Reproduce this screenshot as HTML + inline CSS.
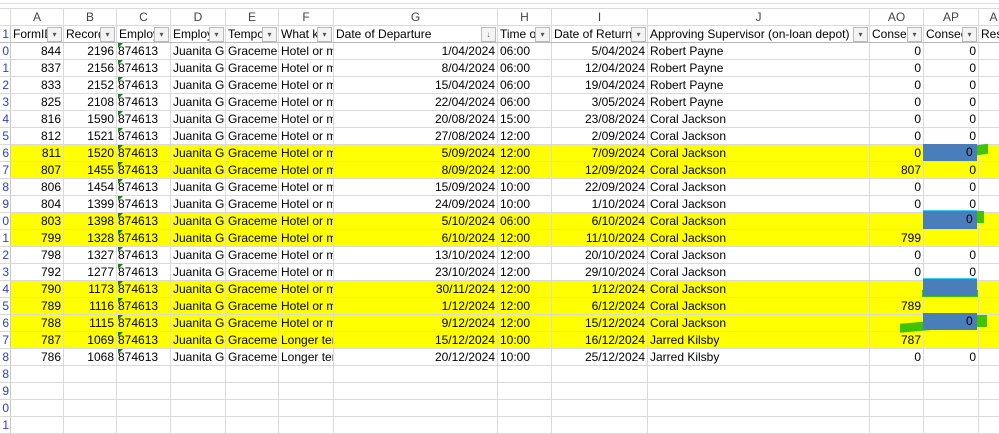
<!DOCTYPE html>
<html><head><meta charset="utf-8"><style>
body{margin:0;width:999px;height:422px;overflow:hidden;background:#fff;font-family:"Liberation Sans",sans-serif;font-size:12px;color:#000;position:relative}
table{position:absolute;left:-1px;top:8px;border-collapse:collapse;table-layout:fixed;width:1009px}
td{height:16px;padding:0 2px;border:1px solid #dadada;white-space:nowrap;overflow:hidden;line-height:16px;position:relative}
tr.L td{background:#fff;text-align:center;color:#444;border-color:#dadada;height:16px}
tr.H td{height:16px;border-bottom:1px solid #bbb}
td.rh{color:#2b3fc8;text-align:right;padding:0 1px 0 0;background:#fff;border-right:1px solid #c8c8c8}
.r{text-align:right}
tr.y td:not(.rh){background:#ffff00}
.c{padding-left:1px}
.c:before{content:"";position:absolute;left:1px;top:0;border-top:5px solid #1e7a1e;border-right:5px solid transparent}
.dd{position:absolute;right:1px;top:1px;width:13px;height:13px;border:1px solid #bbb;background:#f4f4f4;font-size:8px;line-height:13px;text-align:center;color:#555}
.blue{position:absolute;background:#4a7ebb}
.grn{position:absolute;background:#3ec400}
.b0{position:absolute;font-size:12px;line-height:17px}
</style></head><body>
<div style="position:absolute;left:0;top:0;width:999px;height:3px;border-bottom:1px solid #ddd;background:#fff"></div>
<table>
<colgroup><col style="width:11px"><col style="width:53px"><col style="width:53px"><col style="width:54px"><col style="width:55px"><col style="width:53px"><col style="width:55px"><col style="width:164px"><col style="width:54px"><col style="width:96px"><col style="width:222px"><col style="width:54px"><col style="width:55px"><col style="width:30px"></colgroup>
<tr class="L"><td class="rh"></td><td>A</td><td>B</td><td>C</td><td>D</td><td>E</td><td>F</td><td>G</td><td>H</td><td>I</td><td>J</td><td>AO</td><td>AP</td><td>A</td></tr>
<tr class="H"><td class="rh">1</td><td>FormID<span class="dd">▾</span></td><td>Record<span class="dd">▾</span></td><td>Employ<span class="dd">▾</span></td><td>Employ<span class="dd">▾</span></td><td>Tempo<span class="dd">▾</span></td><td>What k<span class="dd">▾</span></td><td>Date of Departure<span class="dd">↓</span></td><td>Time of<span class="dd">▾</span></td><td>Date of Return<span class="dd">▾</span></td><td>Approving Supervisor (on-loan depot)<span class="dd">▾</span></td><td>Consec<span class="dd">▾</span></td><td>Consec<span class="dd">▾</span></td><td>Res</td></tr>
<tr><td class="rh">0</td><td class="r">844</td><td class="r">2196</td><td class="c">874613</td><td>Juanita Ga</td><td>Gracemer</td><td>Hotel or m</td><td class="r">1/04/2024</td><td>06:00</td><td class="r">5/04/2024</td><td>Robert Payne</td><td class="r">0</td><td class="r">0</td><td></td></tr>
<tr><td class="rh">1</td><td class="r">837</td><td class="r">2156</td><td class="c">874613</td><td>Juanita Ga</td><td>Gracemer</td><td>Hotel or m</td><td class="r">8/04/2024</td><td>06:00</td><td class="r">12/04/2024</td><td>Robert Payne</td><td class="r">0</td><td class="r">0</td><td></td></tr>
<tr><td class="rh">2</td><td class="r">833</td><td class="r">2152</td><td class="c">874613</td><td>Juanita Ga</td><td>Gracemer</td><td>Hotel or m</td><td class="r">15/04/2024</td><td>06:00</td><td class="r">19/04/2024</td><td>Robert Payne</td><td class="r">0</td><td class="r">0</td><td></td></tr>
<tr><td class="rh">3</td><td class="r">825</td><td class="r">2108</td><td class="c">874613</td><td>Juanita Ga</td><td>Gracemer</td><td>Hotel or m</td><td class="r">22/04/2024</td><td>06:00</td><td class="r">3/05/2024</td><td>Robert Payne</td><td class="r">0</td><td class="r">0</td><td></td></tr>
<tr><td class="rh">4</td><td class="r">816</td><td class="r">1590</td><td class="c">874613</td><td>Juanita Ga</td><td>Gracemer</td><td>Hotel or m</td><td class="r">20/08/2024</td><td>15:00</td><td class="r">23/08/2024</td><td>Coral Jackson</td><td class="r">0</td><td class="r">0</td><td></td></tr>
<tr><td class="rh">5</td><td class="r">812</td><td class="r">1521</td><td class="c">874613</td><td>Juanita Ga</td><td>Gracemer</td><td>Hotel or m</td><td class="r">27/08/2024</td><td>12:00</td><td class="r">2/09/2024</td><td>Coral Jackson</td><td class="r">0</td><td class="r">0</td><td></td></tr>
<tr class="y"><td class="rh">6</td><td class="r">811</td><td class="r">1520</td><td class="c">874613</td><td>Juanita Ga</td><td>Gracemer</td><td>Hotel or m</td><td class="r">5/09/2024</td><td>12:00</td><td class="r">7/09/2024</td><td>Coral Jackson</td><td class="r">0</td><td class="r"></td><td></td></tr>
<tr class="y"><td class="rh">7</td><td class="r">807</td><td class="r">1455</td><td class="c">874613</td><td>Juanita Ga</td><td>Gracemer</td><td>Hotel or m</td><td class="r">8/09/2024</td><td>12:00</td><td class="r">12/09/2024</td><td>Coral Jackson</td><td class="r">807</td><td class="r">0</td><td></td></tr>
<tr><td class="rh">8</td><td class="r">806</td><td class="r">1454</td><td class="c">874613</td><td>Juanita Ga</td><td>Gracemer</td><td>Hotel or m</td><td class="r">15/09/2024</td><td>10:00</td><td class="r">22/09/2024</td><td>Coral Jackson</td><td class="r">0</td><td class="r">0</td><td></td></tr>
<tr><td class="rh">9</td><td class="r">804</td><td class="r">1399</td><td class="c">874613</td><td>Juanita Ga</td><td>Gracemer</td><td>Hotel or m</td><td class="r">24/09/2024</td><td>10:00</td><td class="r">1/10/2024</td><td>Coral Jackson</td><td class="r">0</td><td class="r">0</td><td></td></tr>
<tr class="y"><td class="rh">0</td><td class="r">803</td><td class="r">1398</td><td class="c">874613</td><td>Juanita Ga</td><td>Gracemer</td><td>Hotel or m</td><td class="r">5/10/2024</td><td>06:00</td><td class="r">6/10/2024</td><td>Coral Jackson</td><td class="r"></td><td class="r"></td><td></td></tr>
<tr class="y"><td class="rh">1</td><td class="r">799</td><td class="r">1328</td><td class="c">874613</td><td>Juanita Ga</td><td>Gracemer</td><td>Hotel or m</td><td class="r">6/10/2024</td><td>12:00</td><td class="r">11/10/2024</td><td>Coral Jackson</td><td class="r">799</td><td class="r"></td><td></td></tr>
<tr><td class="rh">2</td><td class="r">798</td><td class="r">1327</td><td class="c">874613</td><td>Juanita Ga</td><td>Gracemer</td><td>Hotel or m</td><td class="r">13/10/2024</td><td>12:00</td><td class="r">20/10/2024</td><td>Coral Jackson</td><td class="r">0</td><td class="r">0</td><td></td></tr>
<tr><td class="rh">3</td><td class="r">792</td><td class="r">1277</td><td class="c">874613</td><td>Juanita Ga</td><td>Gracemer</td><td>Hotel or m</td><td class="r">23/10/2024</td><td>12:00</td><td class="r">29/10/2024</td><td>Coral Jackson</td><td class="r">0</td><td class="r">0</td><td></td></tr>
<tr class="y"><td class="rh">4</td><td class="r">790</td><td class="r">1173</td><td class="c">874613</td><td>Juanita Ga</td><td>Gracemer</td><td>Hotel or m</td><td class="r">30/11/2024</td><td>12:00</td><td class="r">1/12/2024</td><td>Coral Jackson</td><td class="r"></td><td class="r"></td><td></td></tr>
<tr class="y"><td class="rh">5</td><td class="r">789</td><td class="r">1116</td><td class="c">874613</td><td>Juanita Ga</td><td>Gracemer</td><td>Hotel or m</td><td class="r">1/12/2024</td><td>12:00</td><td class="r">6/12/2024</td><td>Coral Jackson</td><td class="r">789</td><td class="r"></td><td></td></tr>
<tr class="y"><td class="rh">6</td><td class="r">788</td><td class="r">1115</td><td class="c">874613</td><td>Juanita Ga</td><td>Gracemer</td><td>Hotel or m</td><td class="r">9/12/2024</td><td>12:00</td><td class="r">15/12/2024</td><td>Coral Jackson</td><td class="r"></td><td class="r"></td><td></td></tr>
<tr class="y"><td class="rh">7</td><td class="r">787</td><td class="r">1069</td><td class="c">874613</td><td>Juanita Ga</td><td>Gracemer</td><td>Longer ter</td><td class="r">15/12/2024</td><td>10:00</td><td class="r">16/12/2024</td><td>Jarred Kilsby</td><td class="r">787</td><td class="r"></td><td></td></tr>
<tr><td class="rh">8</td><td class="r">786</td><td class="r">1068</td><td class="c">874613</td><td>Juanita Ga</td><td>Gracemer</td><td>Longer ter</td><td class="r">20/12/2024</td><td>10:00</td><td class="r">25/12/2024</td><td>Jarred Kilsby</td><td class="r">0</td><td class="r">0</td><td></td></tr>
<tr><td class="rh">8</td><td></td><td></td><td></td><td></td><td></td><td></td><td></td><td></td><td></td><td></td><td></td><td></td><td></td></tr>
<tr><td class="rh">9</td><td></td><td></td><td></td><td></td><td></td><td></td><td></td><td></td><td></td><td></td><td></td><td></td><td></td></tr>
<tr><td class="rh">0</td><td></td><td></td><td></td><td></td><td></td><td></td><td></td><td></td><td></td><td></td><td></td><td></td><td></td></tr>
<tr><td class="rh">1</td><td></td><td></td><td></td><td></td><td></td><td></td><td></td><td></td><td></td><td></td><td></td><td></td><td></td></tr>
</table>
<div class="grn" style="left:970px;top:145px;width:18px;height:10px;transform:skewY(-8deg)"></div>
<div class="blue" style="left:923px;top:144px;width:54px;height:17px"></div>
<div class="b0" style="left:966px;top:144px">0</div>
<div class="grn" style="left:970px;top:211px;width:14px;height:12px"></div>
<div class="blue" style="left:923px;top:210px;width:54px;height:18px;border-top:1px solid #3cd0ff"></div>
<div class="b0" style="left:966px;top:211px">0</div>
<div class="grn" style="left:922px;top:290px;width:56px;height:7px"></div>
<div class="blue" style="left:923px;top:278px;width:54px;height:17px;border-top:1px solid #3cd0ff"></div>
<div class="grn" style="left:900px;top:322px;width:40px;height:9px;transform:skewY(-5deg)"></div>
<div class="grn" style="left:970px;top:315px;width:17px;height:12px"></div>
<div class="blue" style="left:923px;top:313px;width:54px;height:17px"></div>
<div class="b0" style="left:966px;top:313px">0</div>
</body></html>
